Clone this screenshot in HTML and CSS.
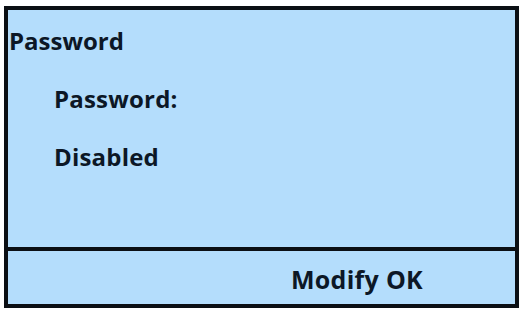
FILE: index.html
```html
<!DOCTYPE html>
<html>
<head>
<meta charset="utf-8">
<link rel="stylesheet" href="styles.css">
</head>
<body>
<div class="screen">
  <div class="content">
    <div class="title">Password</div>
    <div class="item">Password:</div>
    <div class="item">Disabled</div>
  </div>
  <div class="softkeys">
    <span class="key">Modify OK</span>
  </div>
</div>
</body>
</html>
```

FILE: styles.css
```css
html, body {
  margin: 0;
  padding: 0;
  background: #ffffff;
}
body {
  font-family: "Open Sans", "Lato", sans-serif;
  font-weight: 700;
  color: #0c1726;
}
.screen {
  box-sizing: border-box;
  margin: 6px 1px 1px 4px;
  width: 515px;
  height: 302px;
  border: 4px solid #0b0f14;
  background: #b4ddfc;
  display: flex;
  flex-direction: column;
}
.content {
  flex: 1;
  display: flex;
  flex-direction: column;
  padding: 19px 0 0 1px;
  gap: 34px;
}
.title {
  font-size: 24px;
  line-height: 24px;
}
.item {
  font-size: 24px;
  line-height: 24px;
  padding-left: 45px;
  letter-spacing: 0.2px;
}
.softkeys {
  box-sizing: border-box;
  height: 57px;
  border-top: 4px solid #0b0f14;
  display: flex;
  align-items: flex-start;
  justify-content: flex-end;
  padding: 16px 92px 0 0;
}
.key {
  font-size: 25px;
  line-height: 24px;
  letter-spacing: 0.3px;
}
```
